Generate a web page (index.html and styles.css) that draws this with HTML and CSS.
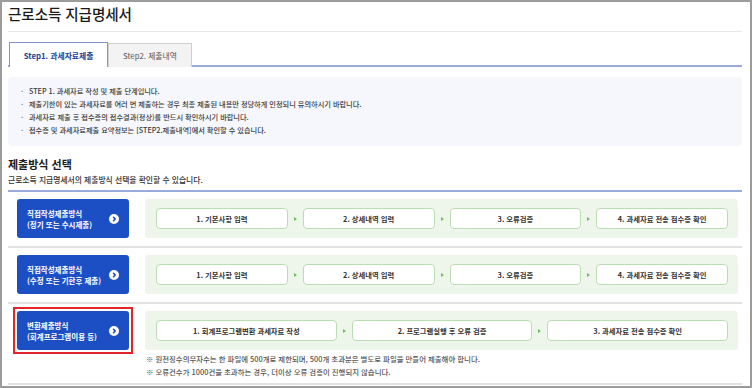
FILE: index.html
```html
<!DOCTYPE html>
<html lang="ko">
<head>
<meta charset="utf-8">
<title>근로소득 지급명세서</title>
<link rel="stylesheet" href="styles.css">
</head>
<body>
<div class="frame">
  <header class="page-head">
    <h1 class="title">근로소득 지급명세서</h1>
  </header>

  <nav class="tabs">
    <a class="tab tab-active">Step1. 과세자료제출</a>
    <a class="tab">Step2. 제출내역</a>
  </nav>

  <ul class="info">
    <li>STEP 1. 과세자료 작성 및 제출 단계입니다.</li>
    <li>제출기한이 있는 과세자료를 여러 번 제출하는 경우 최종 제출된 내용만 정당하게 인정되니 유의하시기 바랍니다.</li>
    <li>과세자료 제출 후 접수증의 접수결과(정상)를 반드시 확인하시기 바랍니다.</li>
    <li>접수증 및 과세자료제출 요약정보는 [STEP2.제출내역]에서 확인할 수 있습니다.</li>
  </ul>

  <h2 class="sec-title">제출방식 선택</h2>
  <p class="sec-desc">근로소득 지급명세서의 제출방식 선택을 확인할 수 있습니다.</p>

  <div class="methods">
    <div class="method">
      <div class="btn-slot">
        <a class="method-btn">
          <span class="btn-text">직접작성제출방식<br>(정기 또는 수시제출)</span>
          <svg class="btn-icon" width="10" height="10" viewBox="0 0 10 10"><circle cx="5" cy="5" r="5" fill="#fff"/><path d="M4.1 2.9 L6.2 5 L4.1 7.1" fill="none" stroke="#1d4fc4" stroke-width="1.5"/></svg>
        </a>
      </div>
      <div class="flow-col">
        <div class="flow">
          <div class="step">1. 기본사항 입력</div>
          <span class="arrow"></span>
          <div class="step">2. 상세내역 입력</div>
          <span class="arrow"></span>
          <div class="step">3. 오류검증</div>
          <span class="arrow"></span>
          <div class="step">4. 과세자료 전송 접수증 확인</div>
        </div>
      </div>
    </div>

    <div class="method">
      <div class="btn-slot">
        <a class="method-btn">
          <span class="btn-text">직접작성제출방식<br>(수정 또는 기한후 제출)</span>
          <svg class="btn-icon" width="10" height="10" viewBox="0 0 10 10"><circle cx="5" cy="5" r="5" fill="#fff"/><path d="M4.1 2.9 L6.2 5 L4.1 7.1" fill="none" stroke="#1d4fc4" stroke-width="1.5"/></svg>
        </a>
      </div>
      <div class="flow-col">
        <div class="flow">
          <div class="step">1. 기본사항 입력</div>
          <span class="arrow"></span>
          <div class="step">2. 상세내역 입력</div>
          <span class="arrow"></span>
          <div class="step">3. 오류검증</div>
          <span class="arrow"></span>
          <div class="step">4. 과세자료 전송 접수증 확인</div>
        </div>
      </div>
    </div>

    <div class="method">
      <div class="btn-slot btn-slot-selected">
        <a class="method-btn">
          <span class="btn-text">변환제출방식<br>(회계프로그램이용 등)</span>
          <svg class="btn-icon" width="10" height="10" viewBox="0 0 10 10"><circle cx="5" cy="5" r="5" fill="#fff"/><path d="M4.1 2.9 L6.2 5 L4.1 7.1" fill="none" stroke="#1d4fc4" stroke-width="1.5"/></svg>
        </a>
      </div>
      <div class="flow-col">
        <div class="flow">
          <div class="step">1. 회계프로그램변환 과세자료 작성</div>
          <span class="arrow"></span>
          <div class="step">2. 프로그램실행 후 오류 검증</div>
          <span class="arrow"></span>
          <div class="step">3. 과세자료 전송 접수증 확인</div>
        </div>
        <p class="note">※ 원천징수의무자수는 한 파일에 500개로 제한되며, 500개 초과분은 별도로 파일을 만들어 제출해야 합니다.</p>
        <p class="note">※ 오류건수가 1000건을 초과하는 경우, 더이상 오류 검증이 진행되지 않습니다.</p>
      </div>
    </div>
  </div>
</div>
</body>
</html>
```

FILE: styles.css
```css
* { box-sizing: border-box; }
html, body { margin: 0; padding: 0; background: #fff; }
body {
  font-family: "Noto Sans CJK KR", "Noto Sans", sans-serif;
  color: #333;
}
.frame {
  width: 752px;
  height: 388px;
  border: 2px solid #9c9c9c;
  padding: 0 8px 0 6px;
  overflow: hidden;
}
.page-head {
  border-bottom: 1px solid #e7e7e7;
  padding-bottom: 5px;
}
.title {
  margin: 0;
  font-size: 14.6px;
  line-height: 24px;
  font-weight: 500;
  color: #1a1a1a;
  letter-spacing: -0.1px;
}
.tabs {
  display: flex;
  margin-top: 10px;
  height: 25px;
  border-bottom: 2px solid #9aaad6;
  padding-left: 1px;
}
.tab {
  display: flex;
  align-items: center;
  justify-content: center;
  font-size: 7.8px;
  height: 24px;
  margin-top: 1px;
  border: 1px solid #cfcfcf;
  border-bottom: none;
  background: #f3f3f3;
  color: #555;
  width: 84px;
}
.tab-active {
  width: 99px;
  height: 25px;
  margin-top: 0;
  margin-bottom: -2px;
  border-color: #8395c6;
  background: #fff;
  color: #1f3d8e;
  font-weight: 700;
}
.info {
  list-style: none;
  margin: 10px 0 0;
  padding: 8px 10px 9px 13px;
  height: 69px;
  background: #f5f7fc;
  border-radius: 4px;
  font-size: 7.2px;
  line-height: 13px;
  color: #3a3a3a;
  font-weight: 500;
}
.info li {
  display: flex;
  gap: 5px;
}
.info li::before {
  content: "·";
  color: #777;
  width: 3px;
}
.sec-title {
  margin: 11px 0 0;
  font-size: 11px;
  line-height: 14px;
  font-weight: 700;
  color: #1a1a1a;
}
.sec-desc {
  margin: 3px 0 0;
  font-size: 7.8px;
  line-height: 11px;
  color: #333;
  font-weight: 500;
  padding-bottom: 5px;
  border-bottom: 2px solid #98abdc;
}
.method {
  display: flex;
  align-items: flex-start;
  gap: 16px;
  padding: 7px 4px 8px 9px;
  border-bottom: 2px solid #e2e2e2;
}
.method:last-child { padding-bottom: 5px; }
.btn-slot { flex: none; }
.btn-slot-selected {
  margin: -4px;
  padding: 2px;
  border: 2px solid #e3242b;
}
.method-btn {
  width: 112px;
  height: 39px;
  display: flex;
  align-items: center;
  justify-content: space-between;
  padding: 0 10px 0 10px;
  background: #1d4fc4;
  border-radius: 3px;
  color: #fff;
  font-size: 7.5px;
  line-height: 11px;
  font-weight: 700;
}
.btn-icon { flex: none; }
.flow-col { flex: 1; }
.flow {
  display: flex;
  align-items: center;
  height: 39px;
  padding: 0 10px 0 11px;
  background: #eef6ec;
  border-radius: 3px;
}
.step {
  flex: 1;
  height: 21px;
  display: flex;
  align-items: center;
  justify-content: center;
  background: #fff;
  border: 1px solid #bcdcb5;
  border-radius: 4px;
  font-size: 7.3px;
  font-weight: 700;
  color: #333;
}
.arrow {
  flex: none;
  width: 15px;
  display: flex;
  justify-content: center;
}
.arrow::before {
  content: "";
  border-left: 3px solid #6cbf5c;
  border-top: 2px solid transparent;
  border-bottom: 2px solid transparent;
}
.note {
  margin: 0;
  font-size: 7.4px;
  line-height: 13px;
  color: #555;
  font-weight: 500;
  padding-left: 1px;
}
.flow + .note { margin-top: 2px; }
```
